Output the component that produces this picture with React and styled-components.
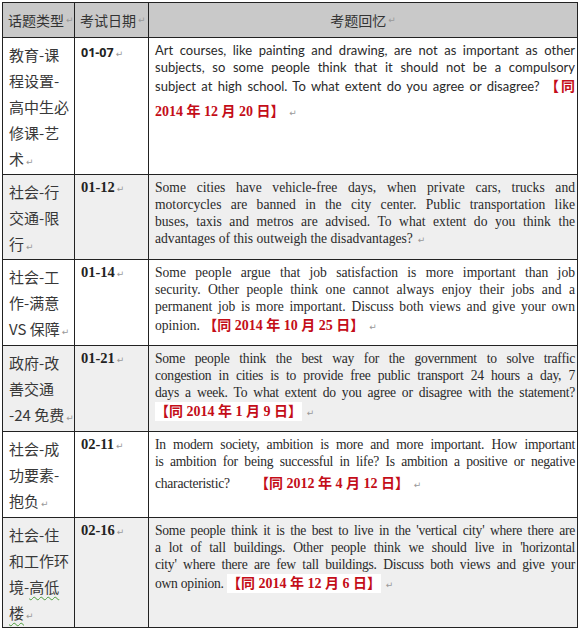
import React from "react";
import styled, { createGlobalStyle } from "styled-components";

const GlobalStyle = createGlobalStyle`
  html, body {
    margin: 0;
    padding: 0;
    background: #fff;
  }
  body {
    font-family: "Liberation Serif", "Noto Sans CJK SC", serif;
  }
`;

const Page = styled.div`
  padding: 2px 0 0 2px;
`;

const Table = styled.div`
  display: grid;
  grid-template-columns: 72px 74px 429px;
  grid-template-rows: 35px 137px 85px 86px 86px 86px 110px;
  width: 575px;
  border-left: 1px solid #222;
  border-top: 1px solid #222;
`;

const Cell = styled.div`
  box-sizing: border-box;
  border-right: 1px solid #222;
  border-bottom: 1px solid #222;
  background: ${p => (p.$shade ? "#efefef" : "#fff")};
  overflow: hidden;
`;

const HeadCell = styled(Cell)`
  background: #c9c9c9;
  display: flex;
  align-items: center;
  justify-content: ${p => (p.$center ? "center" : "flex-start")};
  padding-left: ${p => (p.$center ? "0" : "5px")};
  font-family: "Noto Sans CJK SC", sans-serif;
  font-size: 14px;
  color: #333;
`;

const TopicCell = styled(Cell)`
  padding: 4px 0 0 6px;
  font-family: "Noto Sans CJK SC", sans-serif;
  font-size: 15px;
  line-height: 26px;
  color: #383838;
`;

const TopicLine = styled.div`
  white-space: nowrap;
`;

const Wavy = styled.span`
  text-decoration: underline wavy #4a9a3a;
  text-decoration-thickness: 1px;
  text-underline-offset: 3px;
`;

const DateCell = styled(Cell)`
  padding: ${p => (p.$sans ? "6px" : "4px")} 0 0 6px;
  font-family: ${p =>
    p.$sans ? `"Open Sans", "Liberation Sans", sans-serif` : `"Liberation Serif", serif`};
  font-weight: bold;
  font-size: ${p => (p.$sans ? "12.5px" : "14.5px")};
  line-height: 17px;
  color: #222;
`;

const TextCell = styled(Cell)`
  padding: 4px 2px 0 6px;
  font-family: ${p =>
    p.$sans ? `Lato, "Liberation Sans", sans-serif` : `"Liberation Serif", serif`};
  font-size: ${p => (p.$sans ? "13px" : "13.6px")};
  letter-spacing: ${p => (p.$tight ? "-0.25px" : "0")};
  color: #2a2a2a;
`;

const Line = styled.div`
  line-height: 17px;
  text-align: ${p => (p.$last ? "left" : "justify")};
  text-align-last: ${p => (p.$last ? "left" : "justify")};
  margin-top: ${p => (p.$gap ? "3px" : "0")};
`;

const Red = styled.span`
  color: #c40d18;
  background: #fff;
  font-family: "Liberation Serif", "Noto Sans CJK SC", serif;
  font-weight: bold;
  font-size: 14px;
  letter-spacing: 0;
  line-height: 22px;
  padding: 2px 0;
`;

const Mark = styled.span`
  font-family: "DejaVu Sans", sans-serif;
  font-weight: normal;
  font-size: 9px;
  color: #999;
  margin-left: 2px;
  letter-spacing: 0;
`;

const rows = [
  {
    topic: ["教育-课", "程设置-", "高中生必", "修课-艺", "术"],
    date: "01-07",
    sans: true,
    lines: [
      { t: "Art courses, like painting and drawing, are not as important as other" },
      { t: "subjects, so some people think that it should not be a compulsory" },
      { t: "subject at high school. To what extent do you agree or disagree? ", r: "【同" },
      { t: "", r: "2014 年 12 月 20 日】", gap: true },
    ],
  },
  {
    topic: ["社会-行", "交通-限", "行"],
    date: "01-12",
    shade: true,
    lines: [
      { t: "Some cities have vehicle-free days, when private cars, trucks and" },
      { t: "motorcycles are banned in the city center. Public transportation like" },
      { t: "buses, taxis and metros are advised. To what extent do you think the" },
      { t: "advantages of this outweigh the disadvantages?" },
    ],
  },
  {
    topic: ["社会-工", "作-满意", "VS 保障"],
    date: "01-14",
    lines: [
      { t: "Some people argue that job satisfaction is more important than job" },
      { t: "security. Other people think one cannot always enjoy their jobs and a" },
      { t: "permanent job is more important. Discuss both views and give your own" },
      { t: "opinion. ", r: "【同 2014 年 10 月 25 日】" },
    ],
  },
  {
    topic: ["政府-改", "善交通", "-24 免费"],
    date: "01-21",
    shade: true,
    tight: true,
    lines: [
      { t: "Some people think the best way for the government to solve traffic" },
      { t: "congestion in cities is to provide free public transport 24 hours a day, 7" },
      { t: "days a week. To what extent do you agree or disagree with the statement?" },
      { t: "", r: " 【同 2014 年 1 月 9 日】" },
    ],
  },
  {
    topic: ["社会-成", "功要素-", "抱负"],
    date: "02-11",
    tight: true,
    lines: [
      { t: "In modern society, ambition is more and more important. How important" },
      { t: "is ambition for being successful in life? Is ambition a positive or negative" },
      {
        t: "characteristic?\u00a0\u00a0\u00a0\u00a0\u00a0\u00a0\u00a0 ",
        r: "【同 2012 年 4 月 12 日】",
        gap: true,
      },
    ],
  },
  {
    topic: [
      "社会-住",
      "和工作环",
      <>境-<Wavy>高低</Wavy></>,
      <Wavy>楼</Wavy>,
    ],
    date: "02-16",
    shade: true,
    tight: true,
    lines: [
      { t: "Some people think it is the best to live in the 'vertical city' where there are" },
      { t: "a lot of tall buildings. Other people think we should live in 'horizontal" },
      { t: "city' where there are few tall buildings. Discuss both views and give your" },
      { t: "own opinion. ", r: "【同 2014 年 12 月 6 日】" },
    ],
  },
];

function Row({ row }) {
  const last = row.lines.length - 1;
  return (
    <>
      <TopicCell $shade={row.shade}>
        {row.topic.map((part, i) => (
          <TopicLine key={i}>
            {part}
            {i === row.topic.length - 1 && <Mark>↵</Mark>}
          </TopicLine>
        ))}
      </TopicCell>
      <DateCell $shade={row.shade} $sans={row.sans}>
        {row.date}
        <Mark>↵</Mark>
      </DateCell>
      <TextCell $shade={row.shade} $sans={row.sans} $tight={row.tight}>
        {row.lines.map((line, i) => (
          <Line key={i} $last={i === last} $gap={line.gap}>
            {line.t}
            {line.r && <Red>{line.r}</Red>}
            {i === last && <Mark>{" ↵"}</Mark>}
          </Line>
        ))}
      </TextCell>
    </>
  );
}

export default function App() {
  return (
    <Page>
      <GlobalStyle />
      <Table>
        <HeadCell>
          话题类型<Mark>↵</Mark>
        </HeadCell>
        <HeadCell>
          考试日期<Mark>↵</Mark>
        </HeadCell>
        <HeadCell $center>
          考题回忆<Mark>↵</Mark>
        </HeadCell>
        {rows.map(row => (
          <Row key={row.date} row={row} />
        ))}
      </Table>
    </Page>
  );
}
